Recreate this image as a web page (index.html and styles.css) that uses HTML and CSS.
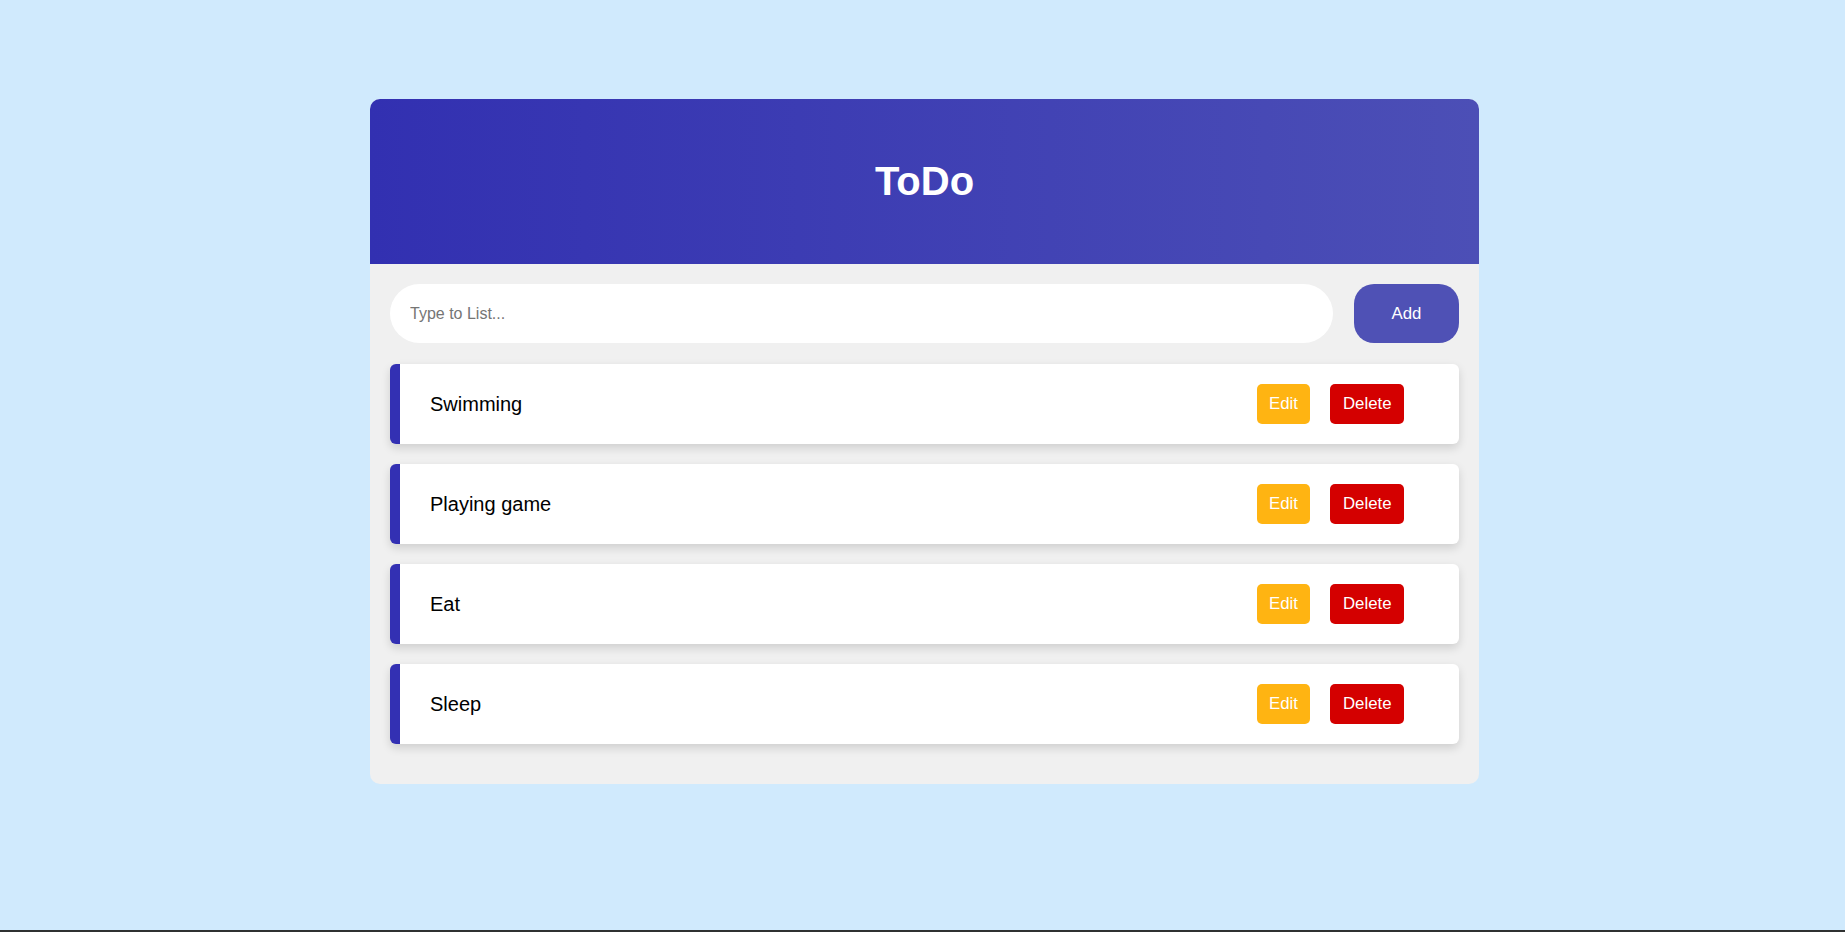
FILE: index.html
```html
<!DOCTYPE html>
<html lang="en">
<head>
<meta charset="utf-8">
<title>ToDo</title>
<link rel="stylesheet" href="styles.css">
</head>
<body>
  <main class="app">
    <header class="app-header">
      <h1 class="app-title">ToDo</h1>
    </header>
    <section class="app-body">
      <form class="add-row" onsubmit="return false;">
        <input class="add-input" type="text" placeholder="Type to List...">
        <button class="add-btn" type="button">Add</button>
      </form>
      <ul class="todo-list">
        <li class="todo-item">
          <span class="todo-text">Swimming</span>
          <div class="todo-actions">
            <button class="btn btn-edit" type="button">Edit</button>
            <button class="btn btn-delete" type="button">Delete</button>
          </div>
        </li>
        <li class="todo-item">
          <span class="todo-text">Playing game</span>
          <div class="todo-actions">
            <button class="btn btn-edit" type="button">Edit</button>
            <button class="btn btn-delete" type="button">Delete</button>
          </div>
        </li>
        <li class="todo-item">
          <span class="todo-text">Eat</span>
          <div class="todo-actions">
            <button class="btn btn-edit" type="button">Edit</button>
            <button class="btn btn-delete" type="button">Delete</button>
          </div>
        </li>
        <li class="todo-item">
          <span class="todo-text">Sleep</span>
          <div class="todo-actions">
            <button class="btn btn-edit" type="button">Edit</button>
            <button class="btn btn-delete" type="button">Delete</button>
          </div>
        </li>
      </ul>
    </section>
  </main>
</body>
</html>
```

FILE: styles.css
```css
* {
  box-sizing: border-box;
}

html,
body {
  margin: 0;
  padding: 0;
}

body {
  min-height: 100vh;
  background: #d0eafd;
  font-family: "Liberation Sans", Arial, sans-serif;
  padding: 99px 0 0 4px;
  border-bottom: 2px solid #2f3131;
}

.app {
  width: 1109px;
  margin: 0 auto;
  background: #f0f0f0;
  border-radius: 10px;
  overflow: hidden;
}

.app-header {
  background: linear-gradient(to right, #3230b1, #4c4fb6);
  padding: 60px 0;
  text-align: center;
}

.app-title {
  margin: 0;
  color: #ffffff;
  font-size: 40px;
  line-height: 45px;
  font-weight: 700;
}

.app-body {
  padding: 20px 20px 40px;
}

.add-row {
  display: flex;
  gap: 21px;
  margin: 0 0 21px;
}

.add-input {
  flex: 1;
  height: 59px;
  border: none;
  outline: none;
  border-radius: 30px;
  background: #ffffff;
  padding: 0 20px;
  font-family: inherit;
  font-size: 16px;
  color: #222;
}

.add-input::placeholder {
  color: #757575;
}

.add-btn {
  width: 105px;
  height: 59px;
  border: none;
  border-radius: 20px;
  background: #4f51b5;
  color: #ffffff;
  font-family: inherit;
  font-size: 16.8px;
  cursor: pointer;
}

.todo-list {
  list-style: none;
  margin: 0;
  padding: 0;
  display: flex;
  flex-direction: column;
  gap: 20px;
}

.todo-item {
  display: flex;
  align-items: center;
  justify-content: space-between;
  height: 80px;
  background: #ffffff;
  border-left: 10px solid #3330b3;
  border-radius: 6px;
  padding: 0 55px 0 30px;
  box-shadow: 0 4px 10px rgba(0, 0, 0, 0.14);
}

.todo-text {
  font-size: 20px;
  color: #000000;
}

.todo-actions {
  display: flex;
  gap: 20px;
}

.btn {
  height: 40px;
  border: none;
  border-radius: 5px;
  padding: 0 12.5px;
  color: #ffffff;
  font-family: inherit;
  font-size: 16.8px;
  cursor: pointer;
}

.btn-edit {
  background: #ffb412;
}

.btn-delete {
  background: #d40000;
}
```
